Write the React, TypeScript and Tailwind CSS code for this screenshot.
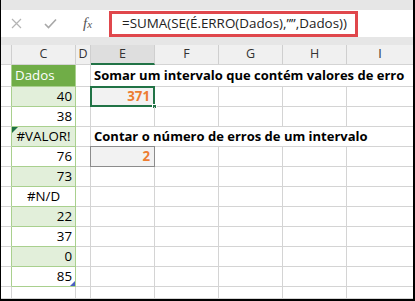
import clsx from "clsx";

const rows = ["Dados", "40", "38", "#VALOR!", "76", "73", "#N/D", "22", "37", "0", "85", ""];

function FormulaBar() {
  return (
    <div className="h-[45px] bg-[#e6e6e6] pt-[10px]">
      <div className="flex h-[27px] items-center bg-white">
        <div className="flex w-[108px] items-center">
          <svg className="ml-[10px]" width="11" height="11" viewBox="0 0 11 11">
            <path d="M1 1 L10 10 M10 1 L1 10" stroke="#b4b4b4" strokeWidth="1.2" fill="none" />
          </svg>
          <svg className="ml-[22px]" width="13" height="11" viewBox="0 0 13 11">
            <path d="M1 6 L4.5 9.5 L12 1.5" stroke="#a8a8a8" strokeWidth="1.6" fill="none" />
          </svg>
          <span className="ml-[26px] font-['Liberation_Serif',serif] text-[15px] italic text-[#555]">
            f<span className="text-[11px]">x</span>
          </span>
        </div>
        <div className="flex h-[26px] w-[249px] items-center border-[3px] border-[#e0474c] pl-[10px] font-['Open_Sans',sans-serif] text-[13.4px] text-[#222]">
          =SUMA(SE(É.ERRO(Dados),””,Dados))
        </div>
      </div>
    </div>
  );
}

function Header() {
  const cols = ["", "C", "D", "E", "F", "G", "H", "I"];
  const widths = ["w-[11px]", "w-[64px]", "w-[15px]", "w-[64px]", "w-[64px]", "w-[64px]", "w-[64px]", "w-[66px]"];
  return (
    <div className="flex h-[20px] bg-[#f0f0f0] font-['Open_Sans',sans-serif] text-[12.5px] text-[#333]">
      {cols.map((c, i) => (
        <div
          key={i}
          className={clsx(
            "flex items-center justify-center border-[#cfcfcf]",
            widths[i],
            i < 7 && "border-r",
            c === "E" ? "border-b-2 border-b-[#217346] bg-[#dedede]" : "border-b border-b-[#d4d4d4]"
          )}
        >
          {c}
        </div>
      ))}
    </div>
  );
}

function Row({ i, value }: { i: number; value: string }) {
  const inTable = i <= 10;
  const h = i === 0 ? "h-[22px]" : i === 11 ? "h-[12px]" : "h-[20px]";
  const band = i === 0 ? "bg-[#70ad47] text-white justify-start pl-[3px]" : i % 2 === 1 ? "bg-[#e2efda]" : "bg-white";
  const isErr = value.startsWith("#");
  const title = i === 0 ? "Somar um intervalo que contém valores de erro" : i === 3 ? "Contar o número de erros de um intervalo" : null;
  const grid = "border-r border-b border-[#d4d4d4]";

  return (
    <div className={clsx("flex font-['Open_Sans',sans-serif] text-[13.3px] text-black", h)}>
      <div className={clsx("w-[11px] border-b border-b-[#d4d4d4] border-r", inTable ? "border-r-[#a9d08e]" : "border-r-[#d4d4d4]")} />
      <div
        className={clsx(
          "relative flex w-[64px] items-center border-r border-b",
          inTable ? "border-[#a9d08e]" : "border-[#d4d4d4]",
          i === 0 ? band : inTable && band,
          i > 0 && (isErr ? "justify-center" : "justify-end pr-[3px]")
        )}
      >
        {value}
        {value === "#VALOR!" && (
          <span className="absolute left-0 top-0 h-0 w-0 border-r-[6px] border-t-[6px] border-r-transparent border-t-[#1e7145]" />
        )}
        {value === "85" && (
          <span className="absolute bottom-0 right-0 h-0 w-0 border-b-[5px] border-l-[5px] border-b-[#4a5fc1] border-l-transparent" />
        )}
      </div>
      <div className={clsx("w-[15px]", grid)} />
      {title ? (
        <div className="flex w-[322px] items-center whitespace-nowrap border-b border-[#d4d4d4] pl-[3px] text-[13px] font-bold text-black">
          {title}
        </div>
      ) : (
        <>
          <div className={clsx("relative flex w-[64px] items-center justify-end pr-[4px] font-bold text-[#ed7d31]", grid, (i === 1 || i === 4) && "bg-[#f2f2f2]")}>
            {i === 1 && "371"}
            {i === 4 && "2"}
            {i === 1 && (
              <>
                <span className="absolute -left-px -top-px bottom-[-1px] right-[-1px] border-2 border-[#217346]" />
                <span className="absolute -bottom-[3px] -right-[3px] h-[5px] w-[5px] border border-white bg-[#217346]" />
              </>
            )}
            {i === 4 && <span className="absolute -left-px -top-px bottom-[-1px] right-[-1px] border border-[#8c8c8c]" />}
          </div>
          <div className={clsx("w-[64px]", grid)} />
          <div className={clsx("w-[64px]", grid)} />
          <div className={clsx("w-[64px]", grid)} />
          <div className="w-[66px] border-b border-[#d4d4d4]" />
        </>
      )}
    </div>
  );
}

export default function App() {
  return (
    <div className="h-[301px] w-[415px] overflow-hidden border-b-2 border-l border-r-2 border-black bg-white">
      <FormulaBar />
      <Header />
      {rows.map((v, i) => (
        <Row key={i} i={i} value={v} />
      ))}
    </div>
  );
}
